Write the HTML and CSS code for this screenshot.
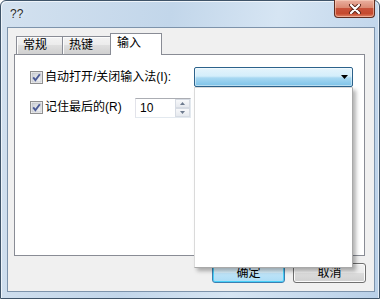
FILE: index.html
```html
<!DOCTYPE html>
<html lang="zh-CN">
<head>
    <meta charset="UTF-8">
    <title>??</title>
    <link rel="stylesheet" href="styles.css">
</head>
<body>
    <div class="window">
        <!-- Title bar -->
        <div class="titlebar">
            <span class="title">??</span>
            <div class="close">
                <svg width="14" height="10" viewBox="0 0 14 10">
                    <path d="M3 1 L11 9 M11 1 L3 9" stroke="#5a2418" stroke-width="4" stroke-linecap="round"/>
                    <path d="M3 1 L11 9 M11 1 L3 9" stroke="#ffffff" stroke-width="2.2" stroke-linecap="round"/>
                </svg>
            </div>
        </div>

        <div class="client">
            <div class="tabs">
                <div class="tab tab-first">常规</div>
                <div class="tab">热键</div>
                <div class="tab active">输入</div>
            </div>

            <div class="panel">
                <div class="row row-ime">
                    <label class="check">
                        <svg class="box" width="13" height="13" viewBox="0 0 13 13">
                            <defs>
                                <linearGradient id="cb" x1="0" y1="0" x2="1" y2="1">
                                    <stop offset="0" stop-color="#cbcfd5"/>
                                    <stop offset="1" stop-color="#f6f6f6"/>
                                </linearGradient>
                            </defs>
                            <rect x="0.5" y="0.5" width="12" height="12" fill="#f4f4f4" stroke="#8f8f8f"/>
                            <rect x="2" y="2" width="9" height="9" fill="url(#cb)" stroke="#b5b9c0" stroke-width="0.6"/>
                            <path d="M3.2 6.4 L5.4 9.2 L9.8 3.2" fill="none" stroke="#4a5a96" stroke-width="1.9"/>
                        </svg>
                        自动打开/关闭输入法(I):
                    </label>
                    <div class="combo">
                        <svg class="arrow" width="7" height="4" viewBox="0 0 7 4">
                            <path d="M0 0 H7 L3.5 4 Z" fill="#000"/>
                        </svg>
                        <div class="dropdown"></div>
                    </div>
                </div>

                <div class="row row-remember">
                    <label class="check check-remember">
                        <svg class="box" width="13" height="13" viewBox="0 0 13 13">
                            <rect x="0.5" y="0.5" width="12" height="12" fill="#f4f4f4" stroke="#8f8f8f"/>
                            <rect x="2" y="2" width="9" height="9" fill="url(#cb)" stroke="#b5b9c0" stroke-width="0.6"/>
                            <path d="M3.2 6.4 L5.4 9.2 L9.8 3.2" fill="none" stroke="#4a5a96" stroke-width="1.9"/>
                        </svg>
                        记住最后的(R)
                    </label>
                    <div class="spin">
                        <span class="spin-value">10</span>
                        <div class="spin-btns">
                            <div class="spin-btn">
                                <svg width="5" height="3" viewBox="0 0 5 3"><path d="M0 3 H5 L2.5 0 Z" fill="#6d7a8e"/></svg>
                            </div>
                            <div class="spin-btn">
                                <svg width="5" height="3" viewBox="0 0 5 3"><path d="M0 0 H5 L2.5 3 Z" fill="#6d7a8e"/></svg>
                            </div>
                        </div>
                    </div>
                </div>
            </div>

            <div class="buttons">
                <button class="btn btn-default">确定</button>
                <button class="btn">取消</button>
            </div>
        </div>
    </div>
</body>
</html>
```

FILE: styles.css
```css
/* Vista style dialog */
body {
    margin: 0;
    font-family: "Liberation Sans", "Noto Sans CJK SC", sans-serif;
    font-size: 12px;
    color: #000;
    background: #fff;
}

.window {
    width: 380px;
    height: 299px;
    box-sizing: border-box;
    border: 1px solid #3f5469;
    border-radius: 6px 6px 0 0;
    padding: 0 4px 6px 6px;
    display: flex;
    flex-direction: column;
    background: linear-gradient(100deg, #d3e1ef 0%, #c2d6ea 40%, #d6e5f3 65%, #b9d0e8 100%);
    box-shadow: inset 1px 1px 0 #eef4fa, inset -1px 0 0 #e4edf6;
}

.titlebar {
    height: 26px;
    display: flex;
    align-items: flex-start;
}

.title {
    margin: 7px 0 0 3px;
    line-height: 12px;
    color: #2b2b2b;
    text-shadow: 0 0 4px #fff;
}

.close {
    margin: -1px 0 0 auto;
    width: 41px;
    height: 18px;
    box-sizing: border-box;
    border: 1px solid #5f2c20;
    border-top: none;
    border-radius: 0 0 4px 4px;
    background: linear-gradient(#eab0a0 0%, #db8a73 45%, #c8523a 50%, #c54a2e 80%, #e0856a 100%);
    box-shadow: inset 0 0 0 1px rgba(255, 220, 200, 0.5);
    display: flex;
    align-items: center;
    justify-content: center;
}

/* Client area */
.client {
    flex: 1;
    border: 1px solid #7d93ab;
    background: #f0f0f0;
    padding: 5px 8px 8px 6px;
    display: flex;
    flex-direction: column;
}

.tabs {
    height: 21px;
    display: flex;
    align-items: flex-end;
    padding-left: 2px;
    position: relative;
    z-index: 1;
}

.tab {
    width: 48px;
    height: 18px;
    box-sizing: border-box;
    border: 1px solid #898c95;
    border-bottom: none;
    border-left: none;
    padding-left: 6px;
    line-height: 17px;
    background: linear-gradient(#f3f3f3 0%, #ebebeb 50%, #dedede 50%, #d0d0d0 100%);
    box-shadow: inset 1px 1px 0 #fcfcfc;
}

.tab-first {
    width: 47px;
    border-left: 1px solid #898c95;
}

.tab.active {
    width: 52px;
    height: 22px;
    margin: 0 0 -1px -1px;
    border-left: 1px solid #898c95;
    background: #fff;
    box-shadow: none;
    line-height: 18px;
    padding-left: 6px;
}

.panel {
    height: 202px;
    box-sizing: border-box;
    border: 1px solid #898c95;
    background: #fff;
    margin-right: 1px;
    padding: 12px 11px 0 15px;
}

.row {
    display: flex;
    align-items: center;
    height: 20px;
}

.row-remember {
    margin-top: 10px;
}

.check {
    display: flex;
    align-items: center;
    line-height: 14px;
    white-space: nowrap;
}

.box {
    margin-right: 2px;
    flex-shrink: 0;
}

.check-remember {
    width: 105px;
}

/* Combo box, pressed with list open */
.combo {
    margin-left: auto;
    width: 159px;
    height: 20px;
    box-sizing: border-box;
    border: 1px solid #2c628b;
    border-radius: 2px;
    background: linear-gradient(#e5f4fc 0%, #d4eefb 45%, #a8d8f2 55%, #7cc2e8 100%);
    box-shadow: inset 0 0 0 1px rgba(255, 255, 255, 0.45);
    display: flex;
    align-items: center;
    justify-content: flex-end;
    padding-right: 4px;
    position: relative;
}

.dropdown {
    position: absolute;
    left: -1px;
    top: 19px;
    width: 159px;
    height: 181px;
    box-sizing: border-box;
    background: #fff;
    border: 1px solid #dadada;
    border-right-color: #a9a9a9;
    border-bottom-color: #a9a9a9;
    box-shadow: 3px 3px 4px rgba(0, 0, 0, 0.3);
    z-index: 5;
}

/* Spin edit */
.spin {
    width: 56px;
    height: 20px;
    box-sizing: border-box;
    border: 1px solid #abadb3;
    border-color: #abadb3 #e3e9ef #e3e9ef #e2e3ea;
    display: flex;
    align-items: center;
    margin-top: 1px;
}

.spin-value {
    flex: 1;
    padding-left: 4px;
    line-height: 14px;
}

.spin-btns {
    width: 15px;
    height: 18px;
    display: flex;
    flex-direction: column;
}

.spin-btn {
    flex: 1;
    box-sizing: border-box;
    border: 1px solid #d6dbe3;
    background: linear-gradient(#f7f8fa, #e6e9ee);
    display: flex;
    align-items: center;
    justify-content: center;
}

/* Dialog buttons */
.buttons {
    margin-top: 7px;
    display: flex;
    justify-content: flex-end;
    gap: 8px;
}

.btn {
    width: 73px;
    height: 20px;
    padding: 0;
    font-family: inherit;
    font-size: 12px;
    line-height: 14px;
    color: #000;
    border: 1px solid #707070;
    border-radius: 3px;
    background: linear-gradient(#f2f2f2 0%, #ebebeb 50%, #dddddd 50%, #cfcfcf 100%);
    box-shadow: inset 0 0 0 1px #fbfbfb;
}

.btn-default {
    border-color: #3c7fb1;
    background: linear-gradient(#e3f3fc 0%, #d4edfa 50%, #bfe4f8 50%, #acdcf5 100%);
    box-shadow: inset 0 0 0 1px #48d0f8;
}
```
